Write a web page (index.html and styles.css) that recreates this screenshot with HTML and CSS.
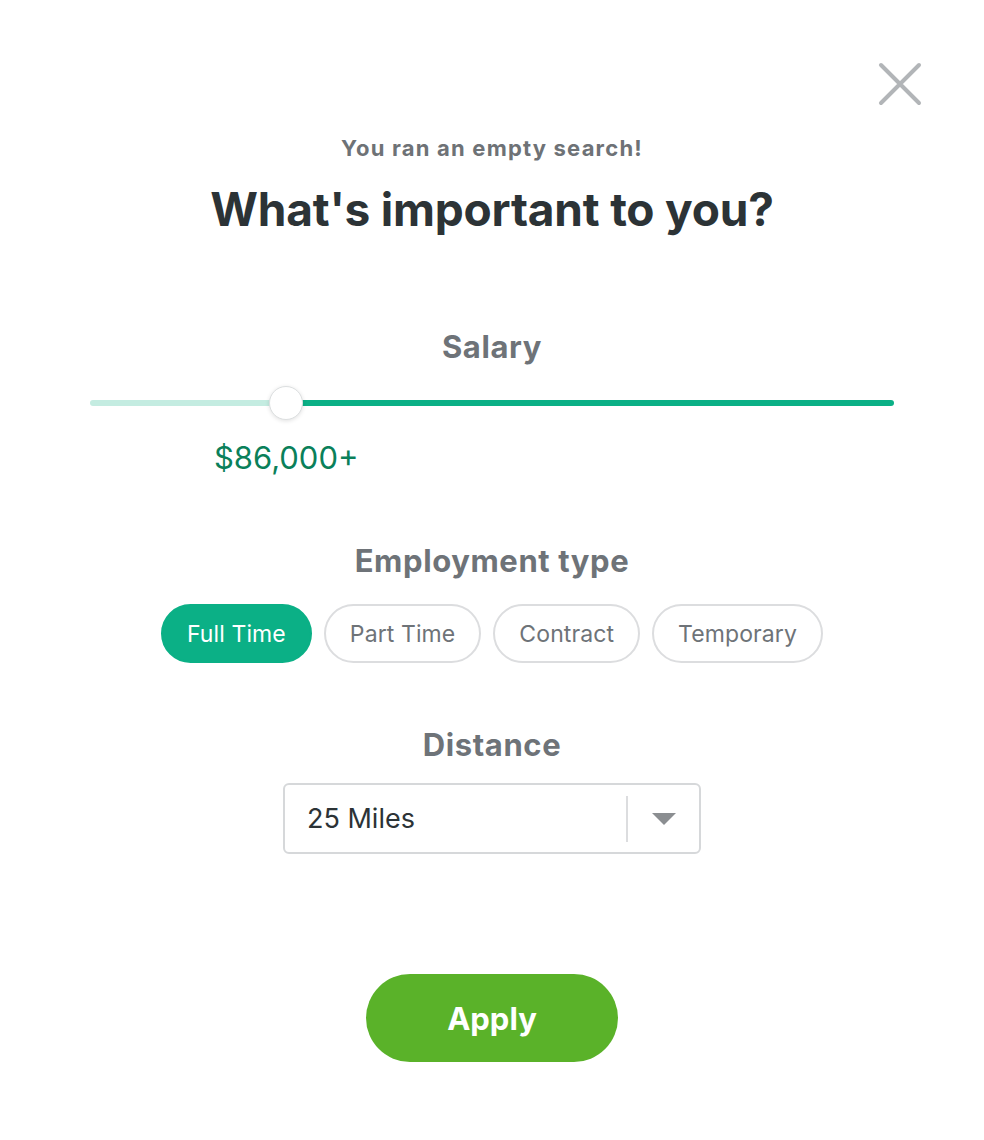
FILE: index.html
```html
<!DOCTYPE html>
<html lang="en">
<head>
<meta charset="utf-8">
<title>What's important to you?</title>
<link rel="stylesheet" href="styles.css">
</head>
<body>
<div class="modal">
  <button class="close" aria-label="Close">
    <svg width="44" height="44" viewBox="0 0 44 44"><path d="M3 3 L41 41 M41 3 L3 41" stroke="#b2b5b8" stroke-width="4" stroke-linecap="round" fill="none"/></svg>
  </button>
  <div class="content">
    <p class="subtitle">You ran an empty search!</p>
    <h1 class="title">What's important to you?</h1>

    <h2 class="section-label salary-label">Salary</h2>
    <div class="slider">
      <div class="track">
        <div class="track-low" style="width: 24.4%"></div>
        <div class="track-high"></div>
        <div class="thumb" style="left: 24.4%"></div>
      </div>
      <div class="value-row">
        <span class="value" style="left: 24.4%">$86,000+</span>
      </div>
    </div>

    <h2 class="section-label emp-label">Employment type</h2>
    <div class="chips">
      <button class="chip active">Full Time</button>
      <button class="chip">Part Time</button>
      <button class="chip">Contract</button>
      <button class="chip">Temporary</button>
    </div>

    <h2 class="section-label dist-label">Distance</h2>
    <div class="select">
      <span class="select-value">25 Miles</span>
      <span class="select-divider"></span>
      <span class="select-arrow"></span>
    </div>

    <button class="apply">Apply</button>
  </div>
</div>
</body>
</html>
```

FILE: styles.css
```css
* { box-sizing: border-box; }
html, body { margin: 0; padding: 0; background: #fff; }
body { font-family: Inter, "Noto Sans", sans-serif; }

.modal {
  position: relative;
  width: 984px;
  min-height: 1140px;
}

.close {
  position: absolute;
  top: 62px;
  left: 878px;
  width: 44px;
  height: 44px;
  padding: 0;
  border: 0;
  background: none;
  cursor: pointer;
}
.close svg { display: block; }

.content {
  display: flex;
  flex-direction: column;
  align-items: center;
  padding-top: 135px;
}

.subtitle {
  margin: 0;
  font-size: 22px;
  line-height: 26px;
  font-weight: 700;
  letter-spacing: 1.2px;
  color: #6e7276;
}

.title {
  margin: 20px 0 0;
  font-size: 46px;
  line-height: 56px;
  font-weight: 700;
  color: #2c3336;
  letter-spacing: -0.2px;
}

.section-label {
  margin: 0;
  font-size: 31px;
  line-height: 36px;
  font-weight: 700;
  letter-spacing: 0.6px;
  color: #6e7378;
}
.salary-label { margin-top: 92px; }
.emp-label { margin-top: 68px; }
.dist-label { margin-top: 64px; }

.slider {
  margin-top: 21px;
  width: 804px;
}
.track {
  position: relative;
  height: 34px;
  display: flex;
  align-items: center;
}
.track-low {
  height: 6px;
  background: #c4ece1;
  border-radius: 3px 0 0 3px;
}
.track-high {
  flex: 1;
  height: 6px;
  background: #0bb086;
  border-radius: 0 3px 3px 0;
}
.thumb {
  position: absolute;
  top: 0;
  width: 34px;
  height: 34px;
  margin-left: -17px;
  border-radius: 50%;
  background: #fff;
  border: 1px solid #dcdfe0;
  box-shadow: 0 1px 4px rgba(0,0,0,0.12);
}
.value-row {
  margin-top: 21px;
  height: 34px;
}
.value {
  position: relative;
  display: inline-block;
  transform: translateX(-50%);
  font-size: 31px;
  line-height: 34px;
  color: #0a805a;
}

.chips {
  margin-top: 25px;
  display: flex;
  gap: 12px;
}
.chip {
  height: 59px;
  padding: 0 24px;
  border: 2px solid #dcdddf;
  border-radius: 30px;
  background: #fff;
  font-family: Inter, "Noto Sans", sans-serif;
  font-size: 23px;
  letter-spacing: 0.1px;
  color: #6e7378;
  cursor: pointer;
}
.chip.active {
  background: #0bb086;
  border-color: #0bb086;
  color: #fff;
}

.select {
  margin-top: 20px;
  width: 418px;
  height: 71px;
  border: 2px solid #d6d8da;
  border-radius: 6px;
  display: flex;
  align-items: center;
  padding-left: 22px;
}
.select-value {
  flex: 1;
  font-size: 27px;
  color: #2c3336;
}
.select-divider {
  width: 2px;
  height: 46px;
  background: #dcdddf;
}
.select-arrow {
  width: 71px;
  display: flex;
  justify-content: center;
}
.select-arrow::before {
  content: "";
  border-left: 12px solid transparent;
  border-right: 12px solid transparent;
  border-top: 12px solid #8b8e91;
}

.apply {
  margin-top: 120px;
  width: 252px;
  height: 88px;
  border: 0;
  border-radius: 44px;
  background: #5ab229;
  color: #fff;
  font-family: Inter, "Noto Sans", sans-serif;
  font-size: 31px;
  font-weight: 700;
  cursor: pointer;
}
```
